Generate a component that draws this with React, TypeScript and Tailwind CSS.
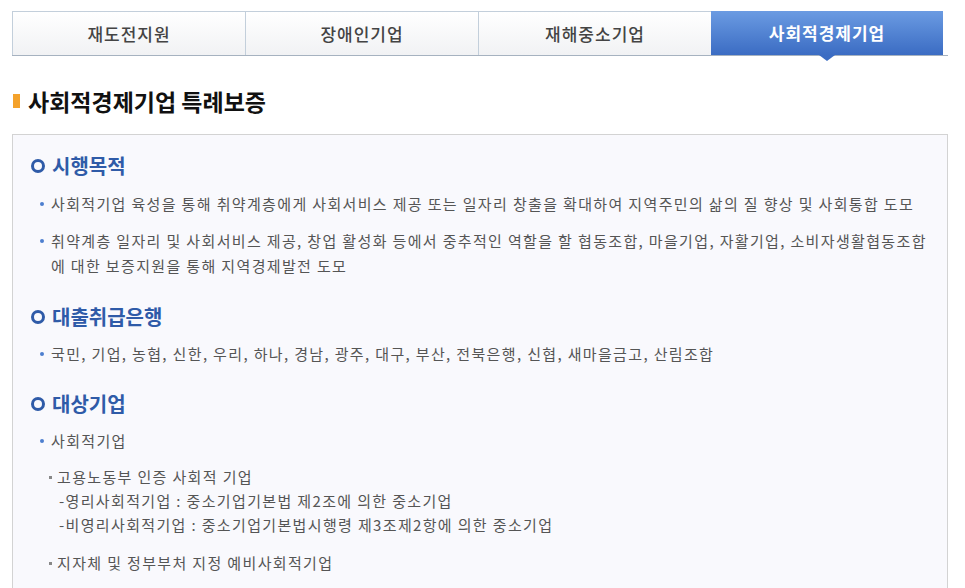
import React from "react";

const tabs = ["재도전지원", "장애인기업", "재해중소기업", "사회적경제기업"];

function Heading({ children }: { children: React.ReactNode }) {
  return (
    <div className="flex items-center h-[24px]">
      <span className="ml-[18px] w-[14px] h-[14px] rounded-full border-[3px] border-[#2f5ba8]"></span>
      <span className="ml-[7px] text-[20px] font-bold text-[#2f5ba8] leading-none">{children}</span>
    </div>
  );
}

function Bullet({ children }: { children: React.ReactNode }) {
  return (
    <div className="flex">
      <span className="ml-[27px] mt-[11px] w-[4px] h-[4px] rounded-full bg-[#4d7fcf] shrink-0"></span>
      <p className="ml-[7px] text-[15px] leading-[25px] tracking-[1.35px] text-[#555]">{children}</p>
    </div>
  );
}

export default function App() {
  return (
    <div className="w-[965px] h-[588px] overflow-hidden bg-white" style={{ fontFamily: '"Noto Sans CJK KR", "Noto Sans", sans-serif' }}>
      <div className="pt-[11px] pl-[12px]">
        <div className="flex w-[936px] border-b border-[#a6b2c0]">
          {tabs.map((t, i) =>
            i === 3 ? (
              <div key={t} className="relative w-[232px] h-[44px] flex items-center justify-center bg-gradient-to-b from-[#6b9be2] to-[#3b6cc3] text-white text-[17px] font-bold tracking-[1px]">
                {t}
                <span className="absolute left-1/2 -translate-x-1/2 top-[44px] w-0 h-0 border-l-[8px] border-r-[8px] border-t-[6px] border-l-transparent border-r-transparent border-t-[#3b6cc3]"></span>
              </div>
            ) : (
              <div key={t} className="w-[233px] h-[44px] flex items-center justify-center border-t border-l border-[#c3cfdb] bg-gradient-to-b from-white to-[#f1f2f4] text-[#444] text-[17px] font-medium tracking-[1px]">
                {t}
              </div>
            )
          )}
        </div>

        <div className="mt-[34px] flex items-center h-[22px]">
          <span className="ml-[1px] w-[7px] h-[14px] bg-[#f4a22b]"></span>
          <h1 className="ml-[8px] text-[23px] font-bold text-[#111] leading-none">사회적경제기업 특례보증</h1>
        </div>

        <div className="mt-[22px] w-[936px] h-[500px] border border-[#d3d3d3] bg-[#f9f9fd] pt-[19px]">
          <Heading>시행목적</Heading>
          <div className="mt-[13px] flex flex-col gap-[12px]">
            <Bullet>사회적기업 육성을 통해 취약계층에게 사회서비스 제공 또는 일자리 창출을 확대하여 지역주민의 삶의 질 향상 및 사회통합 도모</Bullet>
            <Bullet>
              취약계층 일자리 및 사회서비스 제공, 창업 활성화 등에서 중추적인 역할을 할 협동조합, 마을기업, 자활기업, 소비자생활협동조합
              <br />에 대한 보증지원을 통해 지역경제발전 도모
            </Bullet>
          </div>

          <div className="mt-[27px]">
            <Heading>대출취급은행</Heading>
          </div>
          <div className="mt-[12px]">
            <Bullet>국민, 기업, 농협, 신한, 우리, 하나, 경남, 광주, 대구, 부산, 전북은행, 신협, 새마을금고, 산림조합</Bullet>
          </div>

          <div className="mt-[26px]">
            <Heading>대상기업</Heading>
          </div>
          <div className="mt-[12px]">
            <Bullet>사회적기업</Bullet>
          </div>

          <div className="mt-[12px] text-[15px] leading-[24px] tracking-[1.35px] text-[#555]">
            <div className="flex items-center">
              <span className="ml-[36px] w-[3px] h-[3px] bg-[#888]"></span>
              <span className="ml-[5px]">고용노동부 인증 사회적 기업</span>
            </div>
            <div className="ml-[46px]">-영리사회적기업 : 중소기업기본법 제2조에 의한 중소기업</div>
            <div className="ml-[46px]">-비영리사회적기업 : 중소기업기본법시행령 제3조제2항에 의한 중소기업</div>
            <div className="flex items-center mt-[14px]">
              <span className="ml-[36px] w-[3px] h-[3px] bg-[#888]"></span>
              <span className="ml-[5px]">지자체 및 정부부처 지정 예비사회적기업</span>
            </div>
          </div>
        </div>
      </div>
    </div>
  );
}
